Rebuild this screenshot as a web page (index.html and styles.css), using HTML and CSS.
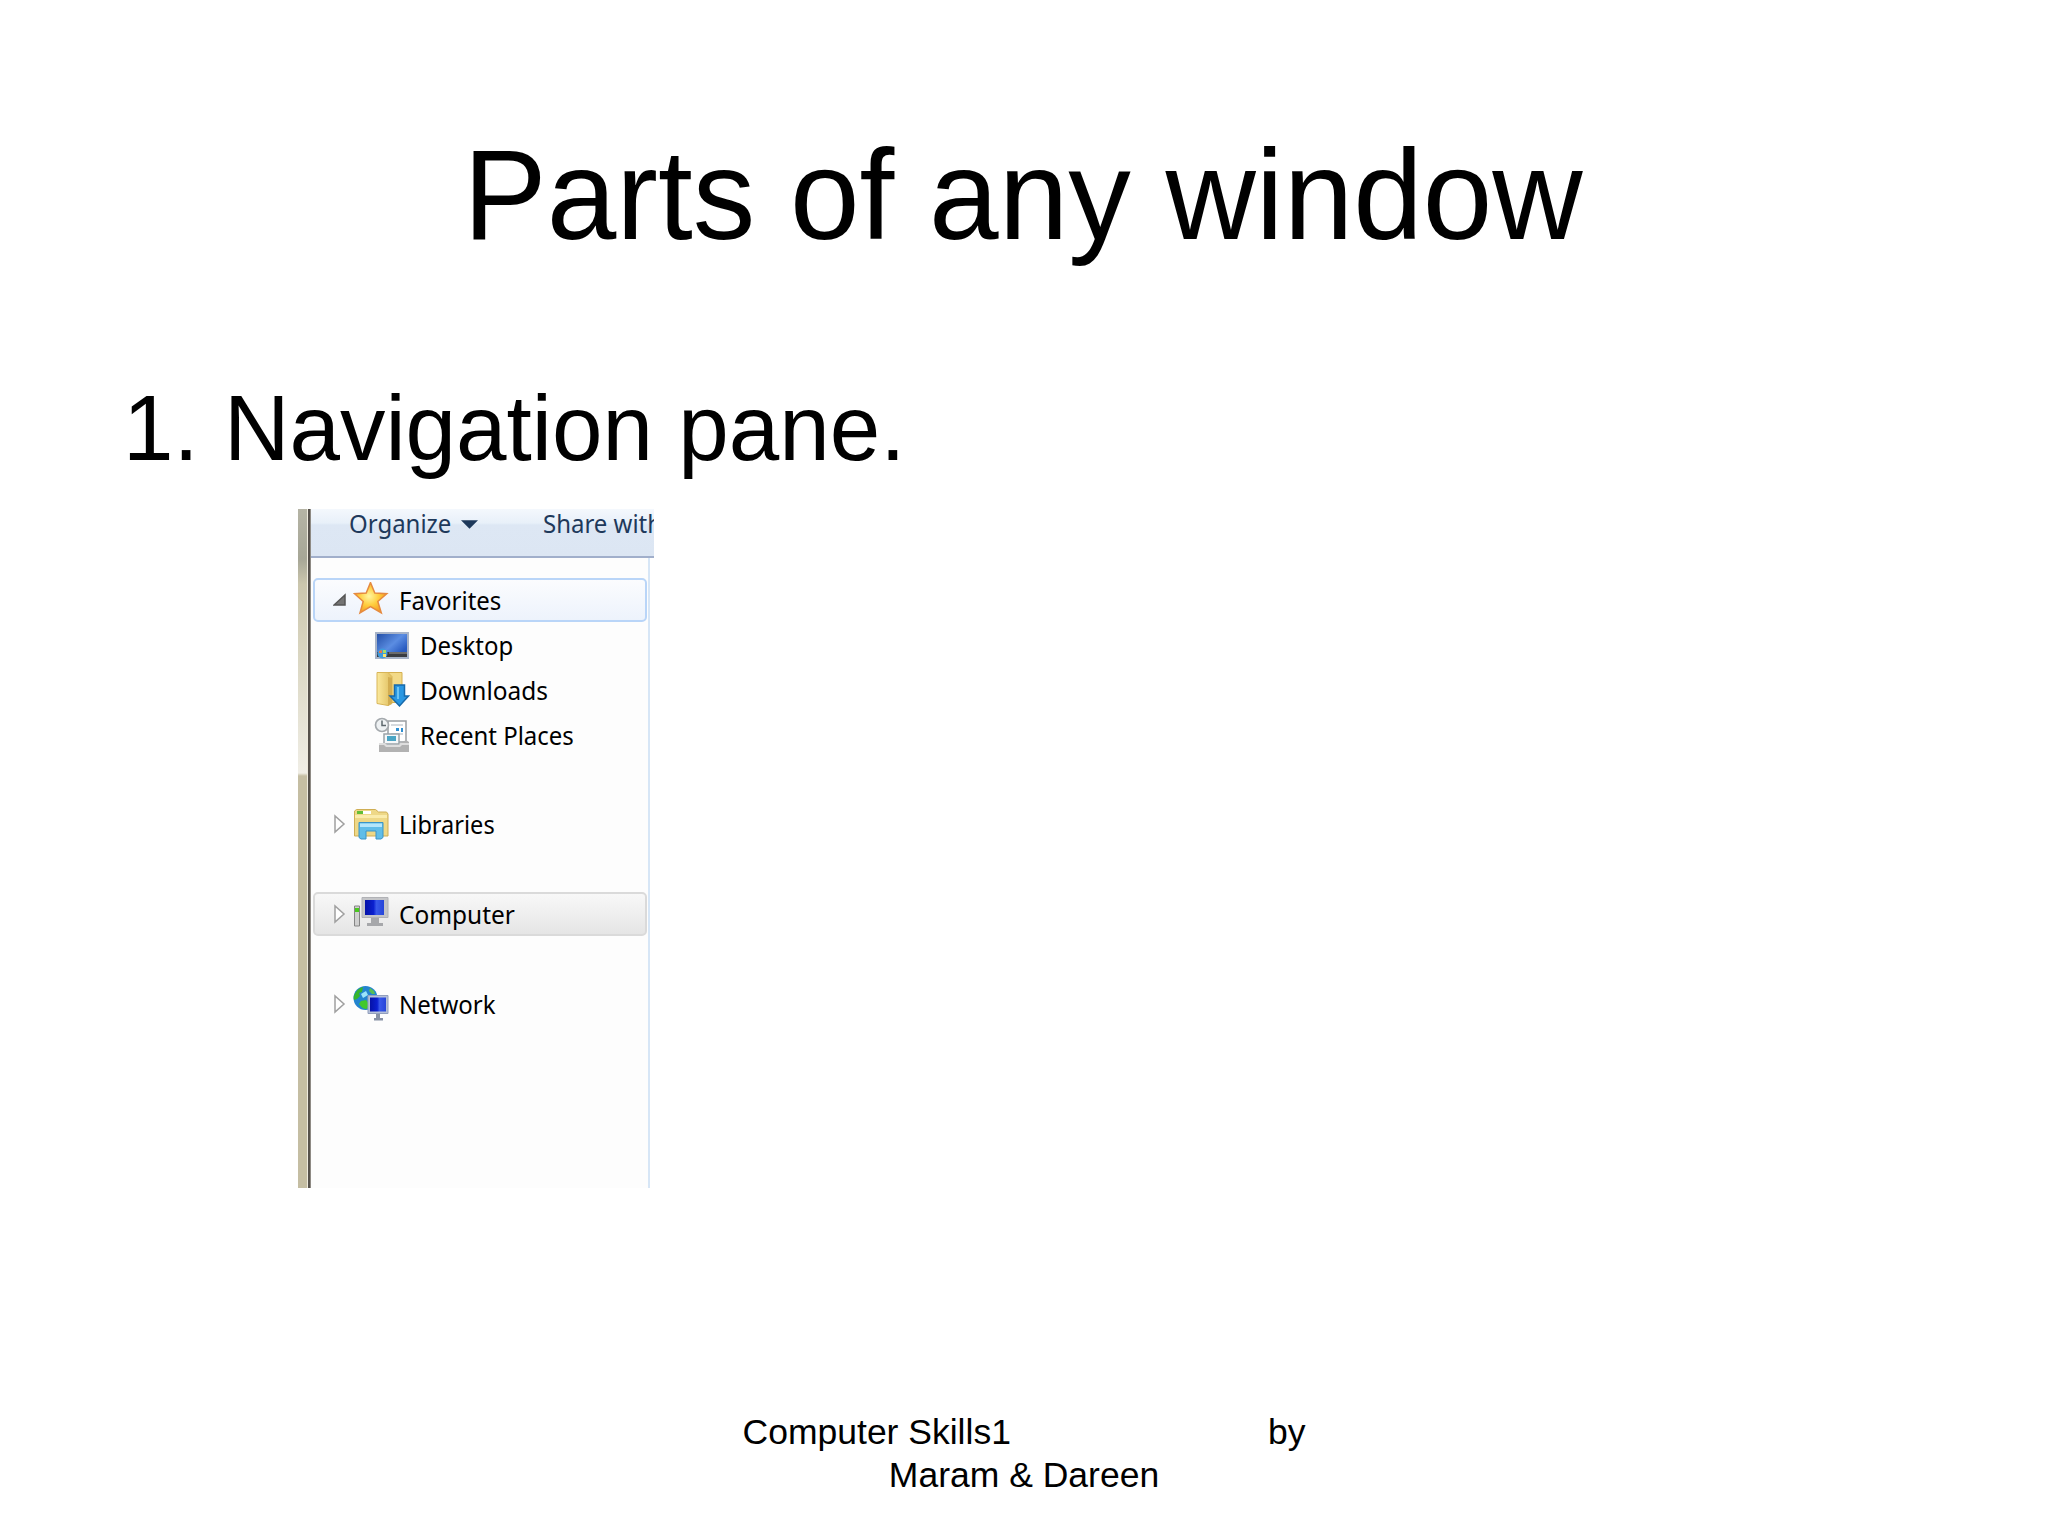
FILE: index.html
```html
<!DOCTYPE html>
<html lang="en">
<head>
    <meta charset="UTF-8">
    <meta name="viewport" content="width=device-width, initial-scale=1.0">
    <title>Parts of any window</title>
    <link rel="stylesheet" href="styles.css">
</head>

<body>

    <div class="slide">
        <h1>Parts of any window</h1>
        <h2>1. Navigation pane.</h2>

        <div class="window">
            <div class="desktop-edge"></div>
            <div class="window-edge"></div>

            <div class="explorer">
                <!-- Toolbar -->
                <div class="toolbar">
                    <span class="label organize">Organize</span>
                    <svg class="caret" viewBox="0 0 18 9"><path d="M0 0h18L9 9z" fill="#1e395b"/></svg>
                    <span class="label share">Share with</span>
                </div>

                <!-- Folder tree -->
                <div class="tree">
                    <div class="row focused">
                        <svg class="arrow" viewBox="0 0 14 20"><path d="M12 5v10H1z" fill="#747474" stroke="#555" stroke-width="1.5"/></svg>
                        <svg class="icon" viewBox="0 0 36 36">
                            <defs>
                                <radialGradient id="gold" cx=".45" cy=".45" r=".55">
                                    <stop offset="0" stop-color="#fff6a0"/>
                                    <stop offset=".55" stop-color="#ffcd3e"/>
                                    <stop offset="1" stop-color="#f5a023"/>
                                </radialGradient>
                            </defs>
                            <path d="M17.5.5l4.300 10.600 12 .6-9 7.800 3.500 11.300-10.800-6.300L7 30.800l3.200-11.300L1.500 11.700l11.700-.6z" fill="url(#gold)" stroke="#e58a40" stroke-width="1.500"/>
                        </svg>
                        <span class="label">Favorites</span>
                    </div>
                    <div class="row child">
                        <svg class="icon" viewBox="0 0 36 36">
                            <defs>
                                <linearGradient id="screen" x1="0" y1="0" x2="1" y2=".7">
                                    <stop offset="0" stop-color="#2450a8"/>
                                    <stop offset=".6" stop-color="#5b8de2"/>
                                    <stop offset="1" stop-color="#285ac0"/>
                                </linearGradient>
                            </defs>
                            <path d="M1 5h34v27H1z" fill="#a7b3c8"/>
                            <path d="M3 7h30v19H3z" fill="url(#screen)"/>
                            <path d="M3 25h30v5H3z" fill="#393c42"/>
                            <path d="M15 25h18v2H15z" fill="#6b6b6b"/>
                            <circle cx="8.500" cy="26.500" r="5" fill="#3f9bdc"/>
                            <path d="M5 24l3-1v3H5z" fill="#e9774a"/>
                            <path d="M9 23h3v3H9z" fill="#a6dc68"/>
                            <path d="M9 27h3v3H9z" fill="#ffe36b"/>
                        </svg>
                        <span class="label">Desktop</span>
                    </div>
                    <div class="row child">
                        <svg class="icon" viewBox="0 0 36 36">
                            <defs>
                                <linearGradient id="folder">
                                    <stop offset="0" stop-color="#fbe99d"/>
                                    <stop offset="1" stop-color="#dfbd5d"/>
                                </linearGradient>
                            </defs>
                            <path d="M12 .5h16v30H12z" fill="#f2d987" stroke="#d5b050"/>
                            <path d="M3 .5h11l4 4v27l-4 2-11-2z" fill="url(#folder)" stroke="#d8b558"/>
                            <path d="M14 5l4 1v25l-4 3z" fill="#d2ad51"/>
                            <path d="M20.500 13h10v11h4L25.500 34 16 24h4.500z" fill="#2997e2" stroke="#1769aa" stroke-width="1.500"/>
                            <path d="M23 15h2v12h-2z" fill="#6bc4f5"/>
                        </svg>
                        <span class="label wide">Downloads</span>
                    </div>
                    <div class="row child">
                        <svg class="icon" viewBox="0 0 36 36">
                            <path d="M14 4h18v21H14z" fill="#fff" stroke="#9a9fa3" stroke-width="1.500"/>
                            <path d="M17 8h12M17 17h12" stroke="#c9ced3" stroke-width="1.500"/>
                            <path d="M22 11h3v3h-3zM27 11h2v4h-2z" fill="#2f8fd2"/>
                            <path d="M10 17h15v10H10z" fill="#f5f8fa" stroke="#9aa3a8" stroke-width="1.500"/>
                            <path d="M13 19h9v5h-9z" fill="#4aa5c5"/>
                            <path d="M5 26h6l2 2h12l2-2 5-3 3 2v10H5z" fill="#b2b2b2"/>
                            <path d="M5 26h6l2 2h12l2-2h8v2h-7l-2 2H12l-2-2H5z" fill="#dedede"/>
                            <circle cx="8" cy="8" r="6.500" fill="#eef1f3" stroke="#a4a9ad" stroke-width="1.700"/>
                            <path d="M8 3.500v5h4" fill="none" stroke="#5e686e" stroke-width="1.500"/>
                        </svg>
                        <span class="label">Recent Places</span>
                    </div>
                    <div class="row spaced">
                        <svg class="arrow" viewBox="0 0 14 20"><path d="M2 2v16l9-8z" fill="#fff" stroke="#a0a0a0" stroke-width="1.500"/></svg>
                        <svg class="icon" viewBox="0 0 36 36">
                            <path d="M1.500 5l2-1.500h19l3 2.500h8L35 8v22H1.500z" fill="#eed887" stroke="#cfae54"/>
                            <path d="M2 9h32v3H2z" fill="#faecac"/>
                            <path d="M4 5h6v3H4z" fill="#63be35"/>
                            <path d="M10 5h8v3h-8z" fill="#fff"/>
                            <path d="M6 16.500h24v15l-2 1.500h-5v-8H13v8H8l-2-1.500z" fill="#60bde8" stroke="#3b94c8"/>
                            <path d="M7 17.500h22v3.500H7z" fill="#b4e6fb"/>
                        </svg>
                        <span class="label narrow">Libraries</span>
                    </div>
                    <div class="row spaced selected">
                        <svg class="arrow" viewBox="0 0 14 20"><path d="M2 2v16l9-8z" fill="#fff" stroke="#a0a0a0" stroke-width="1.500"/></svg>
                        <svg class="icon" viewBox="0 0 36 36">
                            <defs>
                                <linearGradient id="blue">
                                    <stop offset="0" stop-color="#0512a8"/>
                                    <stop offset=".45" stop-color="#0b20cf"/>
                                    <stop offset=".6" stop-color="#3858ea"/>
                                    <stop offset="1" stop-color="#2645d8"/>
                                </linearGradient>
                            </defs>
                            <path d="M1.500 10h5v20h-5z" fill="#cfcfcf" stroke="#858585"/>
                            <path d="M2 12h4v4H2z" fill="#49c91e"/>
                            <path d="M9 1.500h26v20H9z" fill="#c4c5c8" stroke="#b1b2b6"/>
                            <path d="M12 4h19v15H12z" fill="url(#blue)"/>
                            <path d="M18 22h8v5h4v3H14v-3h4z" fill="#a6a7aa"/>
                        </svg>
                        <span class="label wide">Computer</span>
                    </div>
                    <div class="row spaced">
                        <svg class="arrow" viewBox="0 0 14 20"><path d="M2 2v16l9-8z" fill="#fff" stroke="#a0a0a0" stroke-width="1.500"/></svg>
                        <svg class="icon" viewBox="0 0 36 36">
                            <circle cx="12.500" cy="12" r="12" fill="#2384cf"/>
                            <path d="M3 6c2-3 4-4 7-5l-1 5-3 1 1 3-3 3-3 1c-1-3 0-5 2-8z" fill="#35b52c"/>
                            <path d="M8 15l5-1 3 4-2 5c-4 0-6-2-8-5z" fill="#41c82d"/>
                            <path d="M17 2l4 3 1 3h-3l-3-3z" fill="#58be54"/>
                            <path d="M8 8l5-3 2 4-5 3z" fill="#9be4fa"/>
                            <path d="M15 9.500h20v18H15z" fill="#b5c0d8" stroke="#929fbd"/>
                            <path d="M17 11.500h16v14H17z" fill="url(#blue)"/>
                            <path d="M23 28h4v4h3v2.500h-9V32h2z" fill="#8791a5"/>
                        </svg>
                        <span class="label">Network</span>
                    </div>
                </div>
            </div>
        </div>

        <footer>
            <div class="course"><span>Computer Skills1</span><span>by</span></div>
            <div>Maram &amp; Dareen</div>
        </footer>
    </div>

</body>

</html>
```

FILE: styles.css
```css
/* General Styles */
* {
    box-sizing: border-box;
}

body {
    margin: 0;
    background: #fff;
    color: #000;
    font-family: "Liberation Sans", Arial, sans-serif;
}

.slide {
    width: 2048px;
    height: 1536px;
    display: flex;
    flex-direction: column;
    overflow: hidden;
}

h1 {
    margin: 124px 0 0;
    height: 144px;
    font-size: 125.1px;
    line-height: 144px;
    font-weight: 400;
    text-align: center;
    text-indent: -2px;
    transform: scaleY(1.03);
    transform-origin: 0 116px;
}

h2 {
    margin: 109px 0 0 123px;
    height: 104px;
    font-size: 90.8px;
    line-height: 104px;
    font-weight: 400;
    transform: scaleY(1.03);
    transform-origin: 0 84px;
}

/* Window */
.window {
    display: flex;
    width: 356px;
    height: 679px;
    margin: 28px 0 0 298px;
    overflow: hidden;
    font-family: "Noto Sans", "Open Sans", sans-serif;
    font-size: 26px;
    line-height: 36px;
}

.desktop-edge {
    width: 9px;
    background: linear-gradient(#b5b4a5 0, #a7a797 50px, #cbc6ad 75px, #d9d5c0 140px, #f0eee6 264px, #c5bea3 267px);
}

.window-edge {
    width: 4px;
    border-left: 1px solid #eeeade;
    border-right: 1px solid #8e8a84;
    background: #56514b;
}

.explorer {
    flex: 1;
    display: flex;
    flex-direction: column;
    min-width: 0;
}

.label {
    flex-shrink: 0;
    white-space: nowrap;
    transform: scaleX(0.922);
    transform-origin: left;
}

.label.wide {
    transform: scaleX(0.94);
}

.label.narrow {
    transform: scaleX(0.905);
}

.toolbar {
    height: 49px;
    display: flex;
    align-items: flex-start;
    background: linear-gradient(#f4f8fd 0, #e8f0f9 14px, #dde7f4 16px, #dce6f3 100%);
    border-bottom: 2px solid #a1afcb;
    color: #1e395b;
    line-height: 28px;
}

.organize {
    width: 112px;
    margin-left: 38px;
}

.caret {
    flex-shrink: 0;
    width: 17px;
    height: 9px;
    margin-top: 11px;
}

.share {
    margin-left: 65px;
}

.tree {
    flex: 1;
    width: 339px;
    padding: 20px 1px 0 2px;
    background: #fdfdfd;
    border-right: 2px solid #d7e6f6;
}

.row {
    display: flex;
    align-items: center;
    height: 44px;
    margin-bottom: 0.9px;
    padding-left: 18px;
    border: 2px solid transparent;
    border-radius: 5px;
}

.spaced {
    margin-top: 45.7px;
}

.child {
    padding-left: 59px;
}

.focused {
    border-color: #b9d5f8;
    background: linear-gradient(#fbfcfe, #edf3fc);
}

.selected {
    border-color: #dadada;
    background: linear-gradient(#f8f8f8, #e5e5e5);
}

.arrow {
    width: 14px;
    height: 20px;
    margin-right: 6px;
}

.icon {
    width: 36px;
    height: 36px;
    margin-right: 9.5px;
}

/* Footer */
footer {
    margin-top: 223px;
    font-size: 35.5px;
    line-height: 42.5px;
    text-align: center;
}

.course {
    display: flex;
    justify-content: center;
    gap: 257px;
}
```
